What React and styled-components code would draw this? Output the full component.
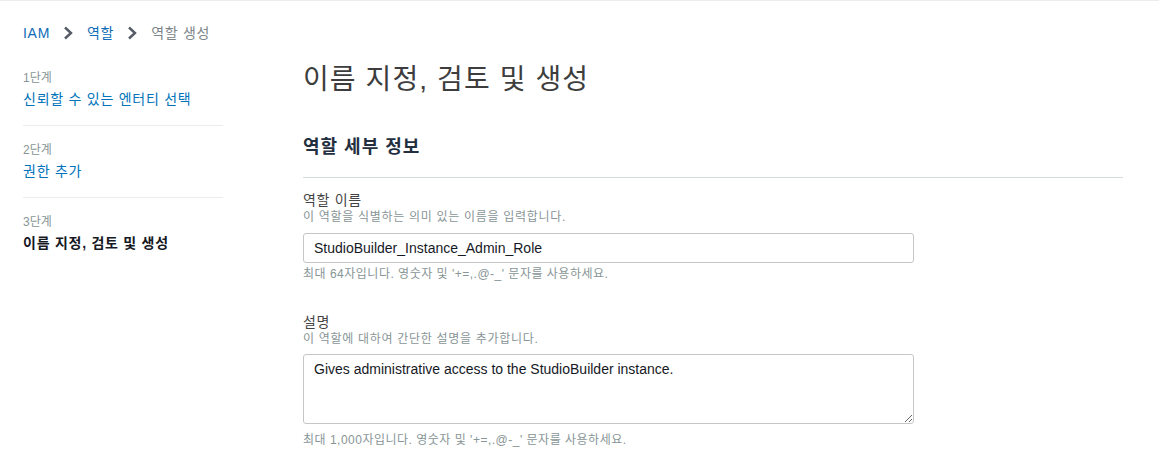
import React from "react";
import styled, { createGlobalStyle } from "styled-components";

const GlobalStyle = createGlobalStyle`
  html, body {
    margin: 0;
    padding: 0;
    background: #fff;
  }
  body {
    font-family: "Liberation Sans", Arial, "Noto Sans CJK KR", sans-serif;
    color: #16191f;
    border-top: 1px solid #eaeded;
  }
`;

const steps = [
  { label: "1단계", name: "신뢰할 수 있는 엔터티 선택", done: true },
  { label: "2단계", name: "권한 추가", done: true },
  { label: "3단계", name: "이름 지정, 검토 및 생성", done: false },
];

const Page = styled.div`
  padding: 22px 23px 0;
`;

const Crumbs = styled.nav`
  display: flex;
  align-items: center;
  height: 20px;
  font-size: 14px;
  line-height: 20px;
  letter-spacing: 0.7px;
`;

const Crumb = styled.a`
  color: ${(p) => (p.current ? "#7d8588" : "#0f6cb8")};
  text-decoration: none;
`;

const Chevron = styled.svg`
  width: 10px;
  height: 14px;
  margin: 0 14px 0 13px;
`;

const Layout = styled.div`
  display: flex;
  margin-top: 19px;
`;

const Sidebar = styled.ul`
  list-style: none;
  margin: 0;
  padding: 0;
  width: 200px;
  flex: none;
`;

const Step = styled.li`
  padding: 16px 0;
  border-bottom: 1px solid #eaeded;
  &:first-child {
    padding-top: 8px;
  }
  &:last-child {
    border-bottom: none;
  }
`;

const StepLabel = styled.div`
  font-size: 12px;
  line-height: 16px;
  color: #879596;
`;

const StepName = styled.div`
  margin-top: 3px;
  font-size: 14px;
  line-height: 20px;
  letter-spacing: 0.75px;
  color: ${(p) => (p.done ? "#0073bb" : "#16191f")};
  font-weight: ${(p) => (p.done ? 400 : 700)};
`;

const Main = styled.main`
  margin-left: 80px;
  width: 820px;
`;

const Title = styled.h1`
  margin: 0;
  font-size: 28px;
  line-height: 36px;
  font-weight: 400;
  letter-spacing: 1.1px;
  color: #3d3d3d;
`;

const Section = styled.h2`
  margin: 37px 0 0;
  padding-bottom: 18px;
  border-bottom: 1px solid #d5dbdb;
  font-size: 18px;
  line-height: 24px;
  font-weight: 700;
  letter-spacing: 1px;
  color: #232f3e;
`;

const Field = styled.div`
  margin-top: ${(p) => p.gap}px;
  display: flex;
  flex-direction: column;
  align-items: flex-start;
`;

const Label = styled.label`
  font-size: 14px;
  line-height: 18px;
  letter-spacing: 0.7px;
  color: #444;
`;

const Hint = styled.div`
  font-size: 12px;
  line-height: 16px;
  letter-spacing: 0.7px;
  color: #879596;
`;

const Constraint = styled(Hint)`
  margin-top: ${(p) => p.gap}px;
  letter-spacing: 0.5px;
`;

const TextInput = styled.input`
  box-sizing: border-box;
  width: 611px;
  height: 30px;
  margin-top: 8px;
  padding: 0 10px;
  border: 1px solid #c6c6c6;
  border-radius: 3px;
  font-family: "Liberation Sans", Arial, "Noto Sans CJK KR", sans-serif;
  font-size: 14px;
  color: #16191f;
  outline: none;
`;

const TextArea = styled.textarea`
  display: block;
  box-sizing: border-box;
  width: 611px;
  height: 70px;
  margin-top: 7px;
  padding: 4px 10px;
  border: 1px solid #c6c6c6;
  border-radius: 3px;
  font-family: "Liberation Sans", Arial, "Noto Sans CJK KR", sans-serif;
  font-size: 14px;
  line-height: 20px;
  color: #16191f;
  resize: vertical;
  outline: none;
`;

const Arrow = () => (
  <Chevron viewBox="0 0 10 14">
    <path d="M2 1.5 L8 7 L2 12.5" fill="none" stroke="#545b64" strokeWidth="2.4" />
  </Chevron>
);

export default function App() {
  return (
    <Page>
      <GlobalStyle />
      <Crumbs>
        <Crumb href="#">IAM</Crumb>
        <Arrow />
        <Crumb href="#">역할</Crumb>
        <Arrow />
        <Crumb current>역할 생성</Crumb>
      </Crumbs>
      <Layout>
        <Sidebar>
          {steps.map((s) => (
            <Step key={s.label}>
              <StepLabel>{s.label}</StepLabel>
              <StepName done={s.done}>{s.name}</StepName>
            </Step>
          ))}
        </Sidebar>
        <Main>
          <Title>이름 지정, 검토 및 생성</Title>
          <Section>역할 세부 정보</Section>
          <Field gap={13}>
            <Label>역할 이름</Label>
            <Hint>이 역할을 식별하는 의미 있는 이름을 입력합니다.</Hint>
            <TextInput defaultValue="StudioBuilder_Instance_Admin_Role" />
            <Constraint gap={3}>최대 64자입니다. 영숫자 및 '+=,.@-_' 문자를 사용하세요.</Constraint>
          </Field>
          <Field gap={31}>
            <Label>설명</Label>
            <Hint>이 역할에 대하여 간단한 설명을 추가합니다.</Hint>
            <TextArea defaultValue="Gives administrative access to the StudioBuilder instance." />
            <Constraint gap={8}>최대 1,000자입니다. 영숫자 및 '+=,.@-_' 문자를 사용하세요.</Constraint>
          </Field>
        </Main>
      </Layout>
    </Page>
  );
}
